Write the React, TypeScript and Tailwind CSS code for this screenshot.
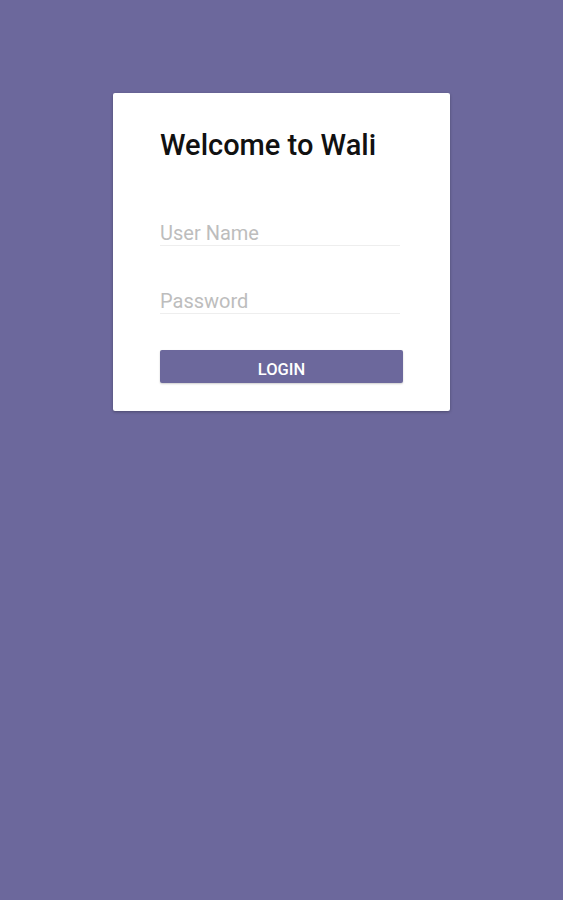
export default function App() {
  return (
    <div className="min-h-[900px] w-full bg-[#6c689c] pt-[93px]" style={{ fontFamily: "Roboto, 'Liberation Sans', sans-serif" }}>
      <div className="ml-[113px] w-[337px] bg-white rounded-[2px] shadow-[0_1px_3px_rgba(0,0,0,0.3)] pl-[47px] pr-[47px] pt-[35px] pb-[28px]">
        <h1 className="text-[29px] leading-[34px] font-medium text-[#111]">Welcome to Wali</h1>
        <div className="mt-[56px] w-[240px] border-b border-[#eeeeee] h-[28px] pt-[3px] text-[20px] leading-[24px] text-[#bdbdbd]">User Name</div>
        <div className="mt-[40px] w-[240px] border-b border-[#eeeeee] h-[28px] pt-[3px] text-[20px] leading-[24px] text-[#bdbdbd]">Password</div>
        <button className="mt-[36px] w-[243px] h-[33px] bg-[#6c689c] rounded-[2px] shadow-[0_1px_2px_rgba(0,0,0,0.2)] text-white text-[16.5px] font-medium flex items-center justify-center pt-[8px]">LOGIN</button>
      </div>
    </div>
  );
}
